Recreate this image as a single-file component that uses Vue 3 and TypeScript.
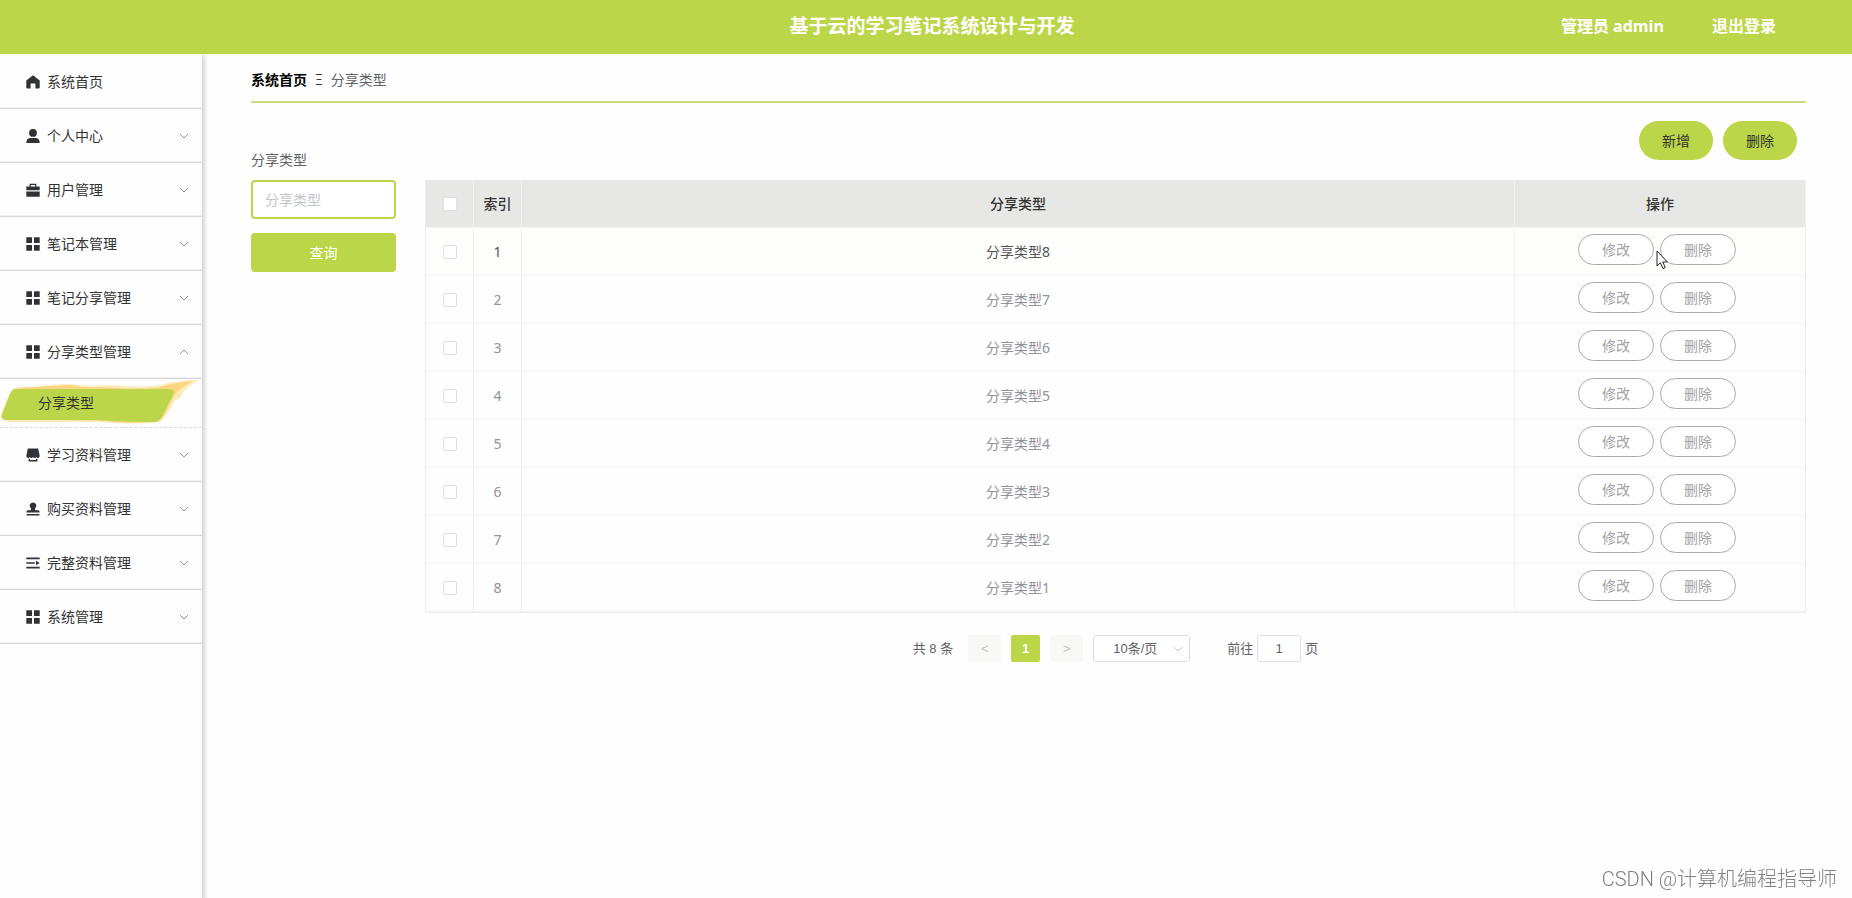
<script setup lang="ts">
import { ref } from 'vue'

interface MenuEntry {
  label: string
  icon: string
  expandable: boolean
  children?: string[]
}

interface ShareType {
  id: number
  name: string
}

const menu: MenuEntry[] = [
  { label: '系统首页', icon: 'home', expandable: false },
  { label: '个人中心', icon: 'user', expandable: true },
  { label: '用户管理', icon: 'case', expandable: true },
  { label: '笔记本管理', icon: 'grid', expandable: true },
  { label: '笔记分享管理', icon: 'grid', expandable: true },
  { label: '分享类型管理', icon: 'grid', expandable: true, children: ['分享类型'] },
  { label: '学习资料管理', icon: 'shop', expandable: true },
  { label: '购买资料管理', icon: 'stamp', expandable: true },
  { label: '完整资料管理', icon: 'lines', expandable: true },
  { label: '系统管理', icon: 'grid', expandable: true },
]

const icons: Record<string, string> = {
  home: 'M7 0.2 L13.7 5.4 V12.4 Q13.7 13.4 12.7 13.4 H9.4 V8.6 H4.6 V13.4 H1.3 Q0.3 13.4 0.3 12.4 V5.4 Z',
  user: 'M7 0 A3.9 3.9 0 1 1 7 7.8 A3.9 3.9 0 1 1 7 0 Z M4 9 H10 Q13.7 9.4 13.7 14 H0.3 Q0.3 9.4 4 9 Z',
  case: 'M3.6 3.6 V0.7 H10.4 V3.6 H13.7 V7.2 H0.3 V3.6 Z M4.8 3.6 H9.2 V1.9 H4.8 Z M0.3 8.4 H13.7 V13.7 H0.3 Z',
  grid: 'M0.3 0.3 H6 V6 H0.3 Z M8 0.3 H13.7 V6 H8 Z M0.3 8 H6 V13.7 H0.3 Z M8 8 H13.7 V13.7 H8 Z',
  shop: 'M1.8 0.6 H12.2 L13.7 8 Q13.4 9.9 11.8 9.9 Q10.7 9.9 10.2 9 Q9.6 9.9 8.6 9.9 Q7.5 9.9 7 9 Q6.4 9.9 5.4 9.9 Q4.3 9.9 3.8 9 Q3.2 9.9 2.2 9.9 Q0.6 9.9 0.3 8 Z M2.6 10.8 H4 V12 H10 V10.8 H11.4 V13.5 H2.6 Z',
  stamp: 'M7 0.4 A3.4 3.4 0 0 1 9.6 5.8 Q8.6 7 9.2 8.2 H12.4 Q13.6 8.2 13.6 10.6 H0.4 Q0.4 8.2 1.6 8.2 H4.8 Q5.4 7 4.4 5.8 A3.4 3.4 0 0 1 7 0.4 Z M0.6 12 H13.4 V13.4 H0.6 Z',
  lines: 'M0.3 1.6 H13.7 V3.2 H0.3 Z M0.3 6.2 H8.8 V7.8 H0.3 Z M10 4.8 L13.6 7 L10 9.2 Z M0.3 10.8 H13.7 V12.4 H0.3 Z',
}

const rows: ShareType[] = [8, 7, 6, 5, 4, 3, 2, 1].map((n, i) => ({ id: i + 1, name: `分享类型${n}` }))

const keyword = ref('')
const pageSize = ref('10条/页')
const jumpTo = ref('1')
</script>

<template>
  <div class="app">
    <header class="topbar">
      <h1 class="title">基于云的学习笔记系统设计与开发</h1>
      <div class="account">
        <span>管理员 admin</span>
        <button type="button" class="logout">退出登录</button>
      </div>
    </header>

    <div class="body">
      <nav class="sidebar">
        <template v-for="item in menu" :key="item.label">
          <a href="#" class="menu-item">
            <svg class="menu-icon" viewBox="0 0 14 14" aria-hidden="true">
              <path :d="icons[item.icon]" fill-rule="evenodd" />
            </svg>
            <span class="menu-label">{{ item.label }}</span>
            <svg v-if="item.expandable" class="chevron" viewBox="0 0 10 10" aria-hidden="true">
              <path :d="item.children ? 'M1 7 L5 3 L9 7' : 'M1 3 L5 7 L9 3'" />
            </svg>
          </a>
          <a v-for="child in item.children" :key="child" href="#" class="submenu-item">
            <svg class="brush" viewBox="0 0 202 48" preserveAspectRatio="none" aria-hidden="true">
              <path
                class="brush-light"
                d="M12 10 Q20 6 32 8 Q50 5 70 5 Q90 8 110 6 Q140 9 160 6 Q180 1 199 1 Q190 6 184 12 L180 19 L174 22 Q168 36 160 43 Q130 46 100 43 H8 Q0 42 1 34 Z"
              />
              <path
                class="brush-dark"
                d="M14 10 Q40 7 72 6 Q80 9 100 8 Q140 11 160 8 Q178 3 193 2 Q180 9 175 15 L165 35 Q160 43 154 43 Q130 45 105 42 L20 40 Z"
              />
              <path
                class="brush-green"
                d="M17 10 H168 Q176 10 173 16 L162 38 Q159 43 154 43 Q120 43 98 41 H7 Q0 41 2 35 L10 15 Q12 10 17 10 Z"
              />
            </svg>
            <span class="submenu-label">{{ child }}</span>
          </a>
        </template>
      </nav>

      <main class="main">
        <div class="breadcrumb">
          <a href="#" class="crumb-home">系统首页</a>
          <span class="crumb-sep">Ξ</span>
          <span class="crumb-current">分享类型</span>
        </div>

        <div class="content">
          <form class="search" @submit.prevent>
            <label class="search-label" for="keyword">分享类型</label>
            <input id="keyword" v-model="keyword" class="search-input" type="text" placeholder="分享类型" />
            <button type="submit" class="search-button">查询</button>
          </form>

          <section class="listing">
            <div class="actions">
              <button type="button" class="action">新增</button>
              <button type="button" class="action">删除</button>
            </div>

            <table class="table">
              <colgroup>
                <col class="col-narrow" />
                <col class="col-narrow" />
                <col />
                <col class="col-ops" />
              </colgroup>
              <thead>
                <tr>
                  <th><input type="checkbox" class="check" aria-label="全选" /></th>
                  <th>索引</th>
                  <th>分享类型</th>
                  <th>操作</th>
                </tr>
              </thead>
              <tbody>
                <tr v-for="row in rows" :key="row.id" :class="{ hovered: row.id === 1 }">
                  <td><input type="checkbox" class="check" :aria-label="row.name" /></td>
                  <td>{{ row.id }}</td>
                  <td>{{ row.name }}</td>
                  <td class="ops-cell">
                    <div class="ops">
                      <button type="button" class="op">修改</button>
                      <button type="button" class="op">删除</button>
                    </div>
                    <svg v-if="row.id === 1" class="pointer" viewBox="0 0 12 20" aria-hidden="true">
                      <path d="M1 1 V16 L4.3 12.8 L7 18.6 L9.3 17.5 L6.7 12 H11.3 Z" />
                    </svg>
                  </td>
                </tr>
              </tbody>
            </table>

            <div class="pagination">
              <span class="total">共 8 条</span>
              <button type="button" class="page-step" disabled aria-label="上一页">&lt;</button>
              <button type="button" class="page-number">1</button>
              <button type="button" class="page-step" disabled aria-label="下一页">&gt;</button>
              <span class="size-box">
                <select v-model="pageSize" class="size-select" aria-label="每页条数">
                  <option>10条/页</option>
                </select>
                <svg class="size-arrow" viewBox="0 0 10 10" aria-hidden="true">
                  <path d="M1 3 L5 7 L9 3" />
                </svg>
              </span>
              <label class="jump">前往<input v-model="jumpTo" class="jump-input" type="text" />页</label>
            </div>
          </section>
        </div>
      </main>
    </div>

    <div class="watermark">CSDN @计算机编程指导师</div>
  </div>
</template>

<style>
body {
  margin: 0;
  background: #fefefe;
}
</style>

<style scoped>
.app {
  --green: #bbd749;
  display: flex;
  flex-direction: column;
  min-height: 100vh;
  font-family: 'Noto Sans', 'Noto Sans CJK SC', sans-serif;
  font-size: 14px;
  line-height: 20px;
  color: #606266;
}

.app *,
.app *::before {
  box-sizing: border-box;
}

button,
input,
select {
  margin: 0;
  padding: 0;
  font: inherit;
}

a {
  color: inherit;
  text-decoration: none;
}

.topbar {
  display: grid;
  grid-template-columns: 1fr auto 1fr;
  align-items: center;
  height: 54px;
  padding-bottom: 3px;
  background: var(--green);
  color: #fff;
}

.title {
  grid-column: 2;
  margin: 0 0 0 12px;
  font-size: 19px;
  line-height: 28px;
  font-weight: 700;
}

.account {
  display: flex;
  justify-content: flex-end;
  gap: 48px;
  padding-right: 76px;
  font-family: 'Open Sans', 'Noto Sans CJK SC', sans-serif;
  font-size: 16px;
  font-weight: 700;
}

.logout {
  border: 0;
  background: none;
  color: inherit;
}

.body {
  display: flex;
  flex: 1;
}

.sidebar {
  flex: 0 0 202px;
  padding-top: 1px;
  background: #fefefe;
  box-shadow: 2px 2px 4px 1px rgba(0, 0, 0, 0.16);
  clip-path: inset(0 -8px 0 0);
}

.menu-item {
  display: flex;
  align-items: center;
  height: 54px;
  padding: 0 13px 0 26px;
  border-bottom: 1px solid #d8d8d8;
  box-shadow: inset 0 -1px 0 #f0f0f0;
  color: #333;
}

.menu-icon {
  width: 14px;
  height: 14px;
  margin-right: 7px;
  fill: #2f3237;
}

.menu-label {
  flex: 1;
}

.chevron {
  width: 10px;
  height: 10px;
  fill: none;
  stroke: #909399;
}

.submenu-item {
  position: relative;
  display: flex;
  align-items: center;
  height: 49px;
  padding-left: 38px;
  border-bottom: 1px dashed #d8d8d8;
  color: #333;
}

.brush {
  position: absolute;
  inset: 0;
  width: 100%;
  height: 100%;
}

.brush-light {
  fill: #fdebb8;
}

.brush-dark {
  fill: #fbd584;
}

.brush-green {
  fill: var(--green);
}

.submenu-label {
  position: relative;
}

.main {
  flex: 1;
  min-width: 0;
  padding: 0 46px 0 49px;
}

.breadcrumb {
  display: flex;
  align-items: center;
  gap: 8px;
  height: 49px;
  padding-top: 4px;
  border-bottom: 2px solid #cddb80;
}

.crumb-home,
.crumb-sep {
  color: #000;
}

.crumb-home {
  font-weight: 700;
}

.crumb-sep {
  font-family: Roboto, sans-serif;
  font-weight: 300;
}

.crumb-current {
  color: #606266;
}

.content {
  display: flex;
  gap: 29px;
  padding-top: 18px;
}

.search {
  display: flex;
  flex: 0 0 145px;
  flex-direction: column;
  padding-top: 29px;
}

.search-label {
  margin-bottom: 10px;
}

.search-input {
  width: 100%;
  height: 39px;
  padding: 0 12px;
  border: 2px solid var(--green);
  border-radius: 4px;
  background: #fff;
  color: #606266;
  outline: 0;
}

.search-input::placeholder {
  color: #c0c4cc;
}

.search-button {
  height: 39px;
  margin-top: 14px;
  border: 0;
  border-radius: 4px;
  background: var(--green);
  color: #fff;
}

.listing {
  flex: 1;
  min-width: 0;
}

.actions {
  display: flex;
  justify-content: flex-end;
  gap: 10px;
  padding-right: 9px;
  margin-bottom: 20px;
}

.action {
  width: 74px;
  height: 39px;
  border: 0;
  border-radius: 20px;
  background: var(--green);
  color: #333;
}

.table {
  width: 100%;
  table-layout: fixed;
  border-collapse: separate;
  border-spacing: 0;
  border: 1px solid #ebeef0;
  border-width: 0 1px 1px;
  text-align: center;
  color: #909399;
}

.col-narrow {
  width: 48px;
}

.col-ops {
  width: 290px;
}

.table th,
.table td {
  height: 48px;
  padding: 0;
  border-right: 1px solid #f1f1f1;
  border-bottom: 1px solid #f3f3f3;
}

.table th:last-child,
.table td:last-child {
  border-right: 0;
}

.table th {
  background: #e7e7e6;
  color: #333;
  font-weight: 500;
}

.hovered td {
  background: #fefefc;
  color: #555;
}

.check {
  display: block;
  width: 14px;
  height: 14px;
  margin: 0 auto;
  appearance: none;
  border: 1px solid #dcdfe6;
  border-radius: 2px;
  background: #fff;
}

.ops-cell {
  position: relative;
}

.ops {
  display: flex;
  justify-content: center;
  gap: 6px;
  padding: 0 6px 4px 0;
}

.op {
  width: 76px;
  height: 31px;
  border: 1px solid #aaa;
  border-radius: 16px;
  background: #fff;
  color: #a3a3a3;
}

.pointer {
  position: absolute;
  top: 22px;
  left: 141px;
  width: 12px;
  height: 20px;
  fill: #fff;
  stroke: #222;
}

.pagination {
  display: flex;
  align-items: center;
  justify-content: center;
  gap: 10px;
  padding-top: 22px;
  font-size: 13px;
  font-family: 'Liberation Sans', 'Noto Sans CJK SC', sans-serif;
}

.total {
  margin-right: 5px;
}

.page-step,
.page-number {
  height: 27px;
  border: 0;
  border-radius: 2px;
}

.page-step {
  width: 33px;
  background: #f8f8f7;
  color: #c0c4cc;
}

.page-number {
  width: 29px;
  background: var(--green);
  color: #fff;
  font-weight: 700;
}

.size-box {
  position: relative;
}

.size-select {
  display: block;
  width: 97px;
  height: 27px;
  padding-left: 19px;
  appearance: none;
  border: 1px solid #dcdfe6;
  border-radius: 3px;
  background: #fff;
  color: #606266;
}

.size-arrow {
  position: absolute;
  top: 9px;
  right: 7px;
  width: 10px;
  height: 10px;
  fill: none;
  stroke: #c0c4cc;
  pointer-events: none;
}

.jump {
  display: flex;
  align-items: center;
  gap: 4px;
  margin-left: 27px;
}

.jump-input {
  width: 44px;
  height: 27px;
  border: 1px solid #dcdfe6;
  border-radius: 3px;
  background: #fff;
  color: #606266;
  text-align: center;
}

.watermark {
  position: fixed;
  right: 15px;
  bottom: 4px;
  font-size: 20px;
  line-height: 30px;
  color: #808080;
  font-family: Roboto, 'Noto Sans CJK SC', sans-serif;
  font-weight: 300;
}
</style>
